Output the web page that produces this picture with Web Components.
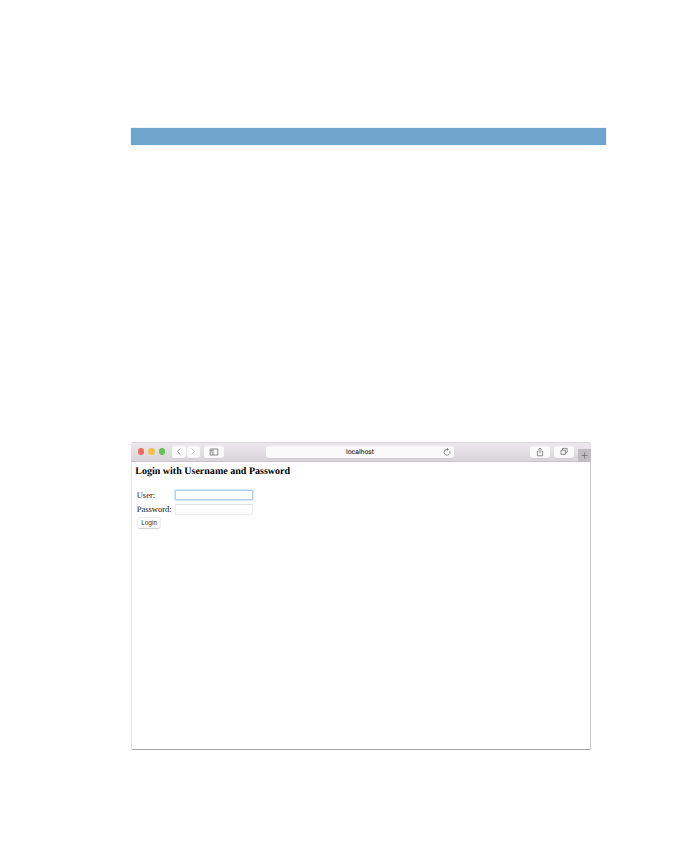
<!DOCTYPE html>
<html lang="en"><head><meta charset="utf-8"><title>Login</title>
<style>
body{margin:0;background:#fff;width:679px;height:851px;overflow:hidden;text-rendering:geometricPrecision}
</style></head><body>
<manual-page>
  <browser-window><login-form></login-form></browser-window>
</manual-page>
<script>
const define=(name,html)=>customElements.define(name,class extends HTMLElement{
  constructor(){super();this.attachShadow({mode:'open'}).innerHTML=html;}
});
define('tool-button',`<style>
:host{display:flex;box-sizing:border-box;width:20px;height:12px;background:#fbfafb;border-radius:2px;align-items:center;justify-content:center;box-shadow:0 .5px .5px #c4c2c4}
</style><slot></slot>`);
define('address-bar',`<style>
:host{display:grid;grid-template-columns:12px 1fr 12px;align-items:center;width:188px;height:12px;background:#fbfafb;border-radius:2px;box-shadow:0 .5px .5px #c0bec0;font:6.5px/12px Inter,"Liberation Sans",sans-serif;color:#333;-webkit-text-stroke:.15px #333}
span{text-align:center}svg{display:block}
</style><i></i><span>localhost</span><svg width="10" height="10" viewBox="0 0 10 10" fill="none" stroke="#777" stroke-width=".8"><path d="M7.6 4.2A2.8 2.8 0 1 1 5 2.5H6.3M4.9 1l1.6 1.5-1.6 1.4"/></svg>`);
define('browser-toolbar',`<style>
:host{display:flex;position:relative;box-sizing:border-box;height:20px;background:linear-gradient(#ebe9eb,#d7d5d7);border-top:1px solid #d8d7d8;border-bottom:1px solid #c8c6c8;border-radius:2px 2px 0 0;align-items:center;padding:0 17px 1px 6.5px}
.lights{display:flex;gap:4px;margin-right:7px}
.lights i{width:6.5px;height:6.5px;border-radius:50%;background:#ed6b60}
.lights i:nth-child(2){background:#f5bf4f}.lights i:nth-child(3){background:#61c454}
.nav{display:flex;gap:1px;margin-right:4px}.nav tool-button{width:13.5px}
address-bar{margin-left:42px}.right{display:flex;gap:4px;margin-left:auto}
.new{position:absolute;right:0;bottom:-1px;width:13px;height:13px;background:#bfbdbf;display:grid;place-items:center}
svg{display:block;fill:none;stroke:#707070;stroke-width:.8}
</style>
<div class="lights"><i></i><i></i><i></i></div>
<div class="nav"><tool-button><svg width="8" height="9" viewBox="0 0 8 9"><path d="M5.3 1.5 2.5 4.5l2.8 3"/></svg></tool-button><tool-button><svg width="8" height="9" viewBox="0 0 8 9" style="stroke:#bbb"><path d="m2.7 1.5 2.8 3-2.8 3"/></svg></tool-button></div>
<tool-button><svg width="10" height="8" viewBox="0 0 10 8"><path d="M1.2 1h7.6v6H1.2zM4 1v6M1.9 2.5h1.4M1.9 4h1.4"/></svg></tool-button>
<address-bar></address-bar>
<div class="right"><tool-button><svg width="10" height="10" viewBox="0 0 10 10"><path d="M3.7 4H2.4v4.8h5.2V4H6.3M5 6.3V1M3.3 2.6 5 1l1.7 1.6"/></svg></tool-button><tool-button><svg width="10" height="9" viewBox="0 0 10 9"><path d="M2 3.2h4.3v4.2H2zM3.5 3.1V1.4h4.6v4.2H6.4"/></svg></tool-button></div>
<div class="new"><svg width="9" height="9" viewBox="0 0 9 9"><path d="M4.5 1.5v6M1.5 4.5h6"/></svg></div>`);
define('browser-window',`<style>
:host{display:flex;flex-direction:column;box-sizing:border-box;width:460px;height:308px;background:#fff}
main{flex:1;border:1px solid #e4e4e4;border-top:0;border-right-color:#c9c9c9;border-bottom-color:#a0a0a0;border-radius:0 0 2px 2px}
</style><browser-toolbar></browser-toolbar><main><slot></slot></main>`);
define('login-form',`<style>
:host{display:block;padding:3px 3.2px;font-family:"Liberation Serif",serif;color:#111}
h1{font-size:10.04px;line-height:13px;margin:0 0 11px;white-space:nowrap;color:#000}
form{display:grid;grid-template-columns:38.3px 78px;row-gap:2px;padding-left:1.5px}
label{font-size:8.5px;line-height:12px;white-space:nowrap}
input{box-sizing:border-box;width:78px;height:11px;margin:0;padding:1px 2px;border:1px solid #ececec;border-top-color:#e0e0e0;background:#fff;outline:0;font-size:8px;align-self:center}
.active{border-color:#b3d0f3;box-shadow:0 0 0 1px #d3e4f9;border-radius:1px;height:10px}
button{justify-self:start;width:22px;height:9.5px;margin:1px 0 0 1.5px;padding:0;border:0;border-radius:2px;box-shadow:0 0 0 .5px #e2e2e2,0 .5px 1px #c4c4c4;background:#fff;font:6px/9.5px Inter,"Liberation Sans",sans-serif;color:#222}
</style><h1>Login with Username and Password</h1>
<form><label for="u">User:</label><input id="u" class="active"><label for="p">Password:</label><input id="p" type="password"><button type="button">Login</button></form>`);
define('manual-page',`<style>
:host{display:flex;flex-direction:column;box-sizing:border-box;height:851px;padding:128px 73px 0 131px}
.rule{height:17px;margin-bottom:297px;background:#6fa4cc;box-shadow:0 0 1px #9fc3de;flex:none}
</style><div class="rule"></div><slot></slot>`);
</script></body></html>
